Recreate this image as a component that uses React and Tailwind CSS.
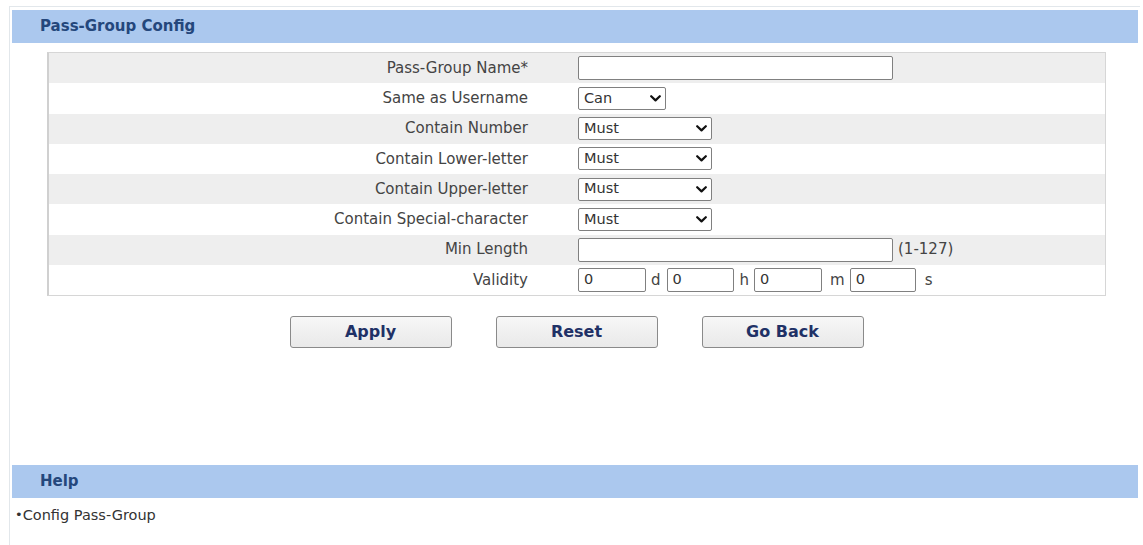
import React from "react";

const FONT = { fontFamily: '"DejaVu Sans", Verdana, sans-serif' };

function Chevron() {
  return (
    <svg width="11" height="7" viewBox="0 0 11 7" className="shrink-0">
      <path d="M1.2 1.2 L5.5 5.4 L9.8 1.2" fill="none" stroke="#111" strokeWidth="2.2" strokeLinecap="round" strokeLinejoin="round" />
    </svg>
  );
}

function Select({ value, w }) {
  return (
    <div className={`${w} h-[23px] border border-[#808080] rounded-[2px] bg-white flex items-center justify-between pl-[5px] pr-[4px] text-[14.5px] text-[#333]`}>
      <span>{value}</span>
      <Chevron />
    </div>
  );
}

function TextBox({ w, value = "" }) {
  return (
    <div className={`${w} h-[24px] border border-[#808080] rounded-[2px] bg-white flex items-center pl-[5px] text-[14.5px] text-[#333] shrink-0`}>
      {value}
    </div>
  );
}

function Row({ label, gray, children }) {
  return (
    <div className={`flex items-center h-[30.25px] ${gray ? "bg-[#eeeeee]" : "bg-white"}`}>
      <div className="w-[479px] text-right text-[15px] text-[#444]">{label}</div>
      <div className="pl-[50px] flex items-center">{children}</div>
    </div>
  );
}

function Btn({ children }) {
  return (
    <div className="w-[162px] h-[32px] border border-[#8a8a8a] rounded-[3px] bg-gradient-to-b from-[#f7f7f7] to-[#e9e9e9] flex items-center justify-center text-[16px] font-bold text-[#1f3166]">
      {children}
    </div>
  );
}

export default function App() {
  return (
    <div className="w-[1143px] h-[545px] bg-white overflow-hidden" style={FONT}>
      <div className="ml-[9px] mt-[6px] w-[1131px] h-[539px] border-l border-t border-[#e2e7eb] pl-[2px] pt-[3px]">
        <div className="w-[1126px] h-[33px] bg-[#abc8ee] flex items-center pl-[28px] text-[15px] font-bold text-[#24477c]">
          Pass-Group Config
        </div>

        <div className="ml-[35px] mt-[9px] w-[1059px] border border-[#d6d6d6] border-l-2 border-l-[#d0d0d0]">
          <Row label="Pass-Group Name*" gray>
            <TextBox w="w-[315px]" />
          </Row>
          <Row label="Same as Username">
            <Select value="Can" w="w-[88px]" />
          </Row>
          <Row label="Contain Number" gray>
            <Select value="Must" w="w-[134px]" />
          </Row>
          <Row label="Contain Lower-letter">
            <Select value="Must" w="w-[134px]" />
          </Row>
          <Row label="Contain Upper-letter" gray>
            <Select value="Must" w="w-[134px]" />
          </Row>
          <Row label="Contain Special-character">
            <Select value="Must" w="w-[134px]" />
          </Row>
          <Row label="Min Length" gray>
            <TextBox w="w-[315px]" />
            <span className="ml-[5px] text-[15px] text-[#444]">(1-127)</span>
          </Row>
          <Row label="Validity">
            <TextBox w="w-[68px]" value="0" />
            <span className="ml-[5px] mr-[6px] text-[15px] text-[#444]">d</span>
            <TextBox w="w-[67px]" value="0" />
            <span className="ml-[6px] mr-[5px] text-[15px] text-[#444]">h</span>
            <TextBox w="w-[68px]" value="0" />
            <span className="ml-[8px] mr-[5px] text-[15px] text-[#444]">m</span>
            <TextBox w="w-[66px]" value="0" />
            <span className="ml-[9px] text-[15px] text-[#444]">s</span>
          </Row>
        </div>

        <div className="ml-[35px] w-[1059px] mt-[20px] flex justify-center gap-[44px]">
          <Btn>Apply</Btn>
          <Btn>Reset</Btn>
          <Btn>Go Back</Btn>
        </div>

        <div className="mt-[117px] w-[1126px] h-[33px] bg-[#abc8ee] flex items-center pl-[28px] text-[15px] font-bold text-[#24477c]">
          Help
        </div>
        <div className="mt-[8px] pl-[3px] text-[14.5px] text-[#333] leading-[18px]">
          <span className="text-[13px] align-[1px]">•</span>Config Pass-Group
        </div>
      </div>
    </div>
  );
}
